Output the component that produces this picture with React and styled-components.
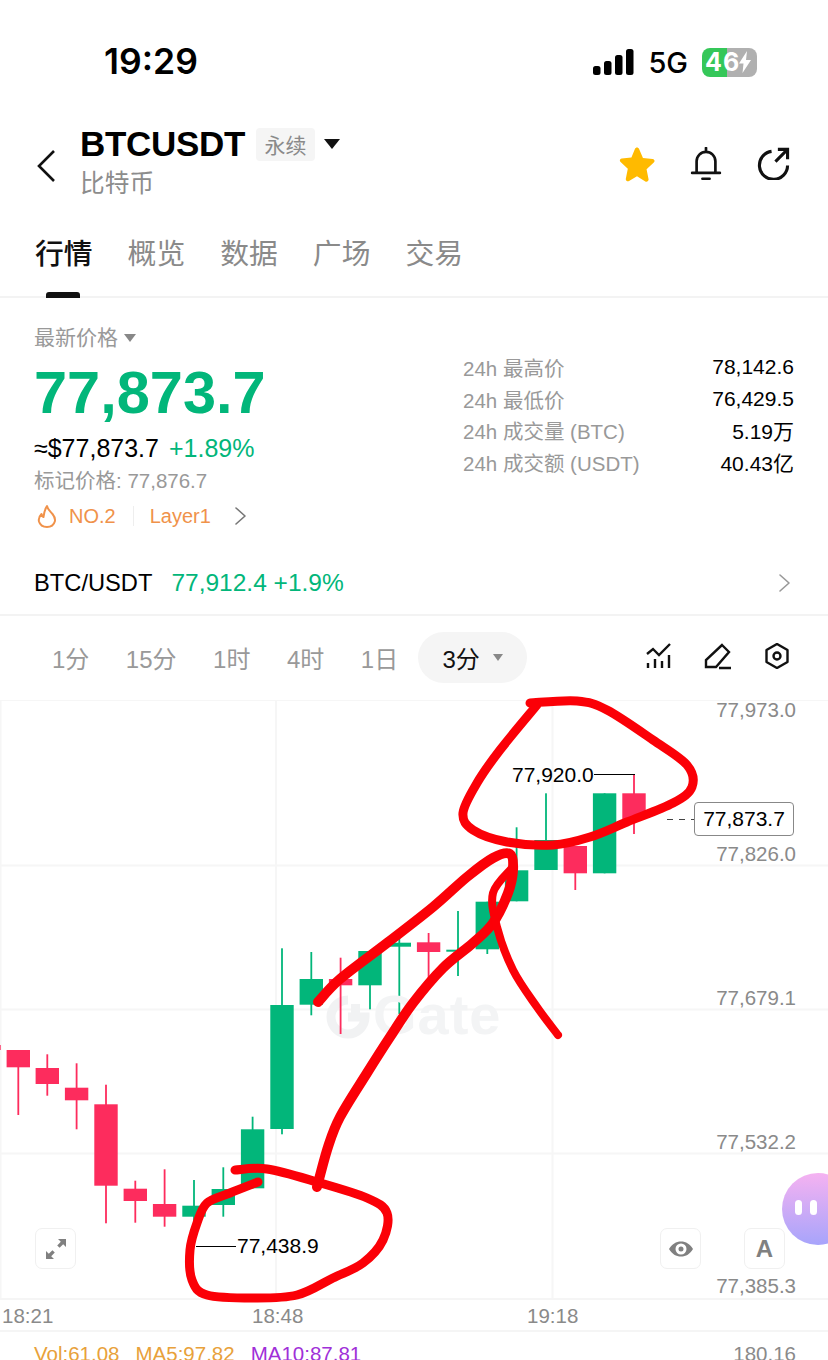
import React from 'react';
import styled, {createGlobalStyle} from 'styled-components';

const GREEN = '#02b67a';
const RED = '#fd2c5d';
const CJK = '"Liberation Sans", "Noto Sans CJK SC", sans-serif';

const GlobalStyle = createGlobalStyle`
  html, body {
    margin: 0;
    padding: 0;
    background: #fff;
  }
  * {
    box-sizing: border-box;
  }
`;

const Page = styled.div`
  position: relative;
  width: 828px;
  height: 1360px;
  overflow: hidden;
  background: #fff;
  font-family: ${CJK};
  color: #000;
`;

const StatusBar = styled.div`
  height: 100px;
  display: flex;
  align-items: center;
  padding: 24px 71px 0 104px;
`;

const Clock = styled.div`
  font-family: Inter, sans-serif;
  font-size: 35.5px;
  font-weight: 600;
  line-height: 76px;
  flex: 1;
`;

const Network = styled.div`
  font-family: Inter, sans-serif;
  font-size: 29px;
  font-weight: 500;
  margin: 0 14px;
`;

const Battery = styled.div`
  position: relative;
  width: 55px;
  height: 29px;
  border-radius: 8px;
  background: linear-gradient(90deg, #35c759 0 46%, #b0b0b0 46% 100%);
  color: #fff;
  font-family: Inter, sans-serif;
  font-size: 25px;
  font-weight: 700;
  line-height: 29px;
  padding-left: 3px;
  letter-spacing: 1px;
  display: flex;
  align-items: center;
`;

const BatteryBolt = styled.svg`
  width: 12px;
  height: 22px;
  margin-left: -1px;
`;

const Header = styled.div`
  height: 105px;
  display: flex;
  align-items: center;
  padding: 0 38px 0 36px;
`;

const BackIcon = styled.svg`
  width: 20px;
  height: 32px;
  margin: 26px 24px 0 0;
`;

const TitleBlock = styled.div`
  flex: 1;
  display: flex;
  flex-direction: column;
  gap: 7px;
  margin-top: 20px;
`;

const TitleRow = styled.div`
  display: flex;
  align-items: center;
  height: 36px;
`;

const Symbol = styled.div`
  font-size: 35px;
  font-weight: 700;
  letter-spacing: -0.3px;
`;

const ContractTag = styled.div`
  width: 59px;
  height: 33px;
  margin: 0 9px 0 11px;
  border-radius: 4px;
  background: #f5f5f5;
  color: #8a8a8a;
  font-size: 21px;
  display: flex;
  align-items: center;
  justify-content: center;
`;

const Caret = styled.div`
  width: 0;
  height: 0;
  border-left: ${p => p.$size}px solid transparent;
  border-right: ${p => p.$size}px solid transparent;
  border-top: ${p => p.$size * 1.3}px solid ${p => p.$color};
`;

const CoinName = styled.div`
  font-size: 24.7px;
  line-height: 30px;
  color: #8c8c8c;
`;

const HeaderIcons = styled.div`
  display: flex;
  align-items: center;
  gap: 34px;
  margin-top: 22px;
`;

const IconSvg = styled.svg`
  display: block;
  width: ${p => p.$size}px;
  height: ${p => p.$size}px;
`;

const Tabs = styled.div`
  height: 93px;
  display: flex;
  gap: 35px;
  padding: 28px 35px 0;
  border-bottom: 2px solid #f3f3f3;
  position: relative;
`;

const Tab = styled.div`
  font-size: 28.8px;
  line-height: 42px;
  color: ${p => (p.$active ? '#111' : '#8a8a8a')};
  font-weight: ${p => (p.$active ? 500 : 400)};
`;

const TabMark = styled.div`
  position: absolute;
  left: 46px;
  bottom: -2px;
  width: 34px;
  height: 6px;
  border-radius: 3px 3px 0 0;
  background: #111;
`;

const PriceSection = styled.div`
  height: 236px;
  display: flex;
  justify-content: space-between;
  padding: 25px 34px 0;
`;

const PriceLeft = styled.div`
  display: flex;
  flex-direction: column;
`;

const PriceLabel = styled.div`
  display: flex;
  align-items: center;
  gap: 6px;
  font-size: 21px;
  line-height: 30px;
  color: #999;
`;

const LastPrice = styled.div`
  font-size: 59.5px;
  font-weight: 700;
  line-height: 62px;
  margin-top: 9px;
  color: ${GREEN};
`;

const UsdRow = styled.div`
  display: flex;
  gap: 10px;
  font-size: 25px;
  line-height: 30px;
  margin-top: 9px;
`;

const Change = styled.span`
  color: ${GREEN};
`;

const MarkPrice = styled.div`
  font-size: 20.5px;
  line-height: 28px;
  margin-top: 4px;
  color: #999;
`;

const RankRow = styled.div`
  display: flex;
  align-items: center;
  height: 28px;
  margin-top: 7px;
  padding-left: 3px;
  font-size: 20px;
  color: #f0924a;
`;

const FlameIcon = styled.svg`
  width: 20px;
  height: 24px;
  margin-right: 12px;
`;

const RankDivider = styled.div`
  width: 1px;
  height: 20px;
  margin: 0 16px 0 17px;
  background: #eee;
`;

const RankArrow = styled.div`
  margin-left: 19px;
`;

const PriceRight = styled.dl`
  margin: 28px 0 0;
  width: 331px;
  display: grid;
  grid-template-columns: 1fr auto;
  grid-auto-rows: 31.7px;
  align-items: center;
  font-size: 20.5px;
`;

const StatLabel = styled.dt`
  color: #999;
`;

const StatValue = styled.dd`
  margin: 0;
  font-size: 21px;
  text-align: right;
`;

const SpotRow = styled.div`
  height: 82px;
  display: flex;
  align-items: center;
  padding: 18px 34px 0 34px;
  border-bottom: 2px solid #f3f3f3;
`;

const SpotName = styled.div`
  margin-right: 19px;
  font-size: 23.7px;
`;

const SpotPrice = styled.div`
  flex: 1;
  font-size: 24.5px;
  color: ${GREEN};
`;

const PeriodRow = styled.div`
  height: 84px;
  display: flex;
  align-items: center;
  padding: 0 38px 2px 52px;
  font-size: 24px;
  color: #999;
`;

const Period = styled.div`
  margin-right: 36.5px;
`;

const ActivePeriod = styled.div`
  width: 109px;
  height: 51px;
  margin-left: -16.5px;
  border-radius: 26px;
  background: #f5f5f5;
  color: #111;
  display: flex;
  align-items: center;
  justify-content: center;
  gap: 13px;
`;

const ToolIcons = styled.div`
  margin-left: auto;
  display: flex;
  gap: 32px;
`;

const Chart = styled.div`
  position: relative;
  height: 598px;
`;

const ChartSvg = styled.svg`
  position: absolute;
  inset: 0;
  display: block;
  width: 828px;
  height: 598px;
`;

const Watermark = styled.div`
  position: absolute;
  left: 373px;
  top: 287px;
  font-size: 56px;
  font-weight: 700;
  line-height: 56px;
  letter-spacing: 1px;
  color: #f3f4f5;
`;

const PriceAxis = styled.div`
  position: absolute;
  top: -2px;
  right: 32px;
  display: flex;
  flex-direction: column;
`;

const AxisLabel = styled.div`
  height: 144px;
  line-height: 24px;
  font-size: 20.5px;
  color: #8a8a8a;
  text-align: right;
`;

const ExtremeLabel = styled.div`
  position: absolute;
  left: ${p => p.$left}px;
  top: ${p => p.$top}px;
  font-size: 21px;
  line-height: 24px;
`;

const LastTag = styled.div`
  position: absolute;
  left: 694px;
  top: 102px;
  width: 100px;
  height: 34px;
  border: 1px solid #888;
  border-radius: 4px;
  background: #fff;
  font-size: 21px;
  display: flex;
  align-items: center;
  justify-content: center;
`;

const ChartButton = styled.div`
  position: absolute;
  left: ${p => p.$left}px;
  top: 528px;
  width: 41px;
  height: 41px;
  border: 1.5px solid #f0f0f0;
  border-radius: 7px;
  background: #fff;
  color: #808080;
  font-size: 24px;
  font-weight: 700;
  display: flex;
  align-items: center;
  justify-content: center;
`;

const AssistantBubble = styled.div`
  position: absolute;
  left: 782px;
  top: 473px;
  width: 72px;
  height: 72px;
  border-radius: 50%;
  background: linear-gradient(180deg, #f5b2f1 0%, #a7a4fb 100%);
  display: flex;
  gap: 8px;
  padding: 27px 0 0 13px;
`;

const BubbleEye = styled.div`
  width: 7px;
  height: 15px;
  border-radius: 4px;
  background: #fff;
`;

const TimeAxis = styled.div`
  position: relative;
  height: 34px;
  border-top: 2px solid #f5f5f5;
  border-bottom: 2px solid #f5f5f5;
  font-size: 20.5px;
  line-height: 34px;
  color: #8a8a8a;
`;

const TimeLabel = styled.span`
  position: absolute;
  left: ${p => p.$left}px;
  top: -1px;
`;

const IndicatorRow = styled.div`
  display: flex;
  gap: 16px;
  padding: 10px 32px 0 34px;
  font-size: 20.5px;
  line-height: 24px;
`;

const Indicator = styled.span`
  color: ${p => p.$color};
`;

const IndicatorValue = styled.span`
  margin-left: auto;
  color: #8a8a8a;
`;

const AnnotationSvg = styled.svg`
  position: absolute;
  inset: 0;
  width: 828px;
  height: 1360px;
  pointer-events: none;
`;

// x, body top, body bottom, wick top, wick bottom, up?
const candles = [
    [-11, 1045, 1050, 1040, 1052, false],
    [18.3, 1050, 1067.3, 1050, 1115, false],
    [47.3, 1068, 1084, 1054.3, 1095.7, false],
    [76.6, 1087.7, 1100.3, 1063.3, 1129.3, false],
    [106, 1104.3, 1185.7, 1084.7, 1223.3, false],
    [135.3, 1188.7, 1201, 1180.7, 1222.7, false],
    [164.6, 1204, 1216.7, 1169.3, 1226.7, false],
    [194, 1205.7, 1216.7, 1180, 1246, true],
    [223.3, 1189, 1205, 1167.3, 1216.7, true],
    [252.6, 1129.3, 1188.3, 1116.7, 1188.3, true],
    [282, 1005, 1129, 948.3, 1134.3, true],
    [311.3, 979, 1004.7, 952, 1015.3, true],
    [340.6, 979, 985.3, 957.7, 1034, false],
    [370, 951, 985.3, 951, 1009.3, true],
    [399.3, 942.7, 946.7, 936.7, 1020, true],
    [428.6, 942.3, 952, 933, 980, false],
    [458, 949.7, 951.7, 911, 976, true],
    [487.3, 901.7, 949.3, 901.7, 954, true],
    [516.6, 870.3, 901.3, 827.3, 901.3, true],
    [546, 840, 870, 793.3, 870, true],
    [575.3, 846, 873.3, 846, 890, false],
    [604.6, 793.3, 873.3, 793.3, 873.3, true],
    [634, 793.3, 819, 774, 834, false],
];

// the pen marks drawn over the screenshot
const strokes = [
    {width: 9, points: [[530, 703], [577, 701], [607, 710], [653, 740], [687, 765], [692, 787], [673, 803], [627, 822], [590, 837], [553, 845], [507, 842], [473, 830], [463, 813], [477, 783], [500, 750], [537, 705]]},
    {width: 10, points: [[318, 1002], [340, 979], [387, 943], [433, 907], [467, 877], [493, 858], [510, 854], [513, 870], [508, 893], [493, 923], [473, 943], [443, 968], [413, 1003], [390, 1037], [367, 1073], [340, 1117], [328, 1147], [317, 1187]]},
    {width: 8, points: [[512, 868], [493, 893], [497, 927], [513, 970], [537, 1007], [558, 1035]]},
    {width: 9, points: [[258, 1182], [230, 1193], [207, 1203], [197, 1223], [190, 1250], [192, 1280], [207, 1295], [253, 1298], [297, 1295], [333, 1278], [363, 1263], [383, 1240], [387, 1213], [367, 1198], [317, 1182], [267, 1169], [235, 1170]]},
];

// smooth pen stroke through the points
function smoothPath(points) {
    let d = `M${points[0][0]} ${points[0][1]}`;
    for (let i = 0; i < points.length - 1; i++) {
        const p0 = points[Math.max(i - 1, 0)];
        const p1 = points[i];
        const p2 = points[i + 1];
        const p3 = points[Math.min(i + 2, points.length - 1)];
        const c1x = p1[0] + (p2[0] - p0[0]) / 6;
        const c1y = p1[1] + (p2[1] - p0[1]) / 6;
        const c2x = p2[0] - (p3[0] - p1[0]) / 6;
        const c2y = p2[1] - (p3[1] - p1[1]) / 6;
        d += ` C${c1x} ${c1y} ${c2x} ${c2y} ${p2[0]} ${p2[1]}`;
    }
    return d;
}

function Candle({x, top, bottom, wickTop, wickBottom, up}) {
    const color = up ? GREEN : RED;
    return (
        <g fill={color}>
            <rect x={x - 0.9} y={wickTop} width="1.8" height={wickBottom - wickTop}/>
            <rect x={x - 11.7} y={top} width="23.4" height={bottom - top}/>
        </g>
    );
}

function ChevronRight({color}) {
    return (
        <IconSvg $size={20} viewBox="0 0 20 20" fill="none" stroke={color} strokeWidth="1.6">
            <path d="M6 2l9 8-9 8" strokeLinecap="round" strokeLinejoin="round"/>
        </IconSvg>
    );
}

function PriceChart() {
    return (
        <ChartSvg viewBox="0 700 828 598">
            <g stroke="#f6f6f6" strokeWidth="2">
                <line x1="0" y1="700" x2="828" y2="700"/>
                <line x1="0" y1="865.5" x2="828" y2="865.5"/>
                <line x1="0" y1="1009.5" x2="828" y2="1009.5"/>
                <line x1="0" y1="1153.5" x2="828" y2="1153.5"/>
                <line x1="0.5" y1="700" x2="0.5" y2="1298"/>
                <line x1="276" y1="700" x2="276" y2="1298"/>
                <line x1="552.5" y1="700" x2="552.5" y2="1298"/>
            </g>
            <path d="M348 1000a17 17 0 1 0 17 17h-17" fill="none" stroke="#f1f2f3" strokeWidth="9"/>
            <rect x="351" y="1004" width="9" height="9" fill="#f1f2f3"/>
            {candles.map(([x, top, bottom, wickTop, wickBottom, up]) => (
                <Candle key={x} x={x} top={top} bottom={bottom} wickTop={wickTop} wickBottom={wickBottom} up={up}/>
            ))}
            <g stroke="#000" strokeWidth="1" fill="none">
                <path d="M594 774.5h41"/>
                <path d="M196 1246.5h40"/>
                <path d="M667 819.5h28" stroke="#444" strokeDasharray="6 6"/>
            </g>
        </ChartSvg>
    );
}

function App() {
    return (
        <Page>
            <GlobalStyle/>
            <StatusBar>
                <Clock>19:29</Clock>
                <svg width="41" height="26" viewBox="0 0 41 26" fill="#000">
                    <rect x="0" y="17" width="7.5" height="9" rx="2.5"/>
                    <rect x="11" y="12" width="7.5" height="14" rx="2.5"/>
                    <rect x="22" y="6" width="7.5" height="20" rx="2.5"/>
                    <rect x="33" y="0" width="7.5" height="26" rx="2.5"/>
                </svg>
                <Network>5G</Network>
                <Battery>
                    46
                    <BatteryBolt viewBox="0 0 12 22" fill="#fff">
                        <path d="M8 0L0 12.5h4.5L3.5 22 12 9H7z"/>
                    </BatteryBolt>
                </Battery>
            </StatusBar>

            <Header>
                <BackIcon viewBox="0 0 20 32" fill="none" stroke="#111" strokeWidth="2.6">
                    <path d="M18 1L3 16l15 15"/>
                </BackIcon>
                <TitleBlock>
                    <TitleRow>
                        <Symbol>BTCUSDT</Symbol>
                        <ContractTag>永续</ContractTag>
                        <Caret $size={8} $color="#111"/>
                    </TitleRow>
                    <CoinName>比特币</CoinName>
                </TitleBlock>
                <HeaderIcons>
                    <IconSvg $size={36} viewBox="0 0 38 38">
                        <path d="M19 1.5c1 0 1.7.6 2.1 1.5l4.2 9.6 10.2 1.1c2 .2 2.7 2.5 1.2 3.8l-7.6 7 2.1 10.5c.4 2-1.7 3.5-3.4 2.5L19 31.8 10.6 37c-1.7 1-3.8-.5-3.4-2.5l2.1-10.5-7.6-7c-1.500-1.3-.8-3.600 1.2-3.8l10.2-1.100L16.9 3c.4-.9 1.100-1.500 2.100-1.500z" fill="#ffba00"/>
                    </IconSvg>
                    <IconSvg $size={34} viewBox="0 0 34 38" fill="none" stroke="#111" strokeWidth="3">
                        <path d="M6.5 28V16a10.5 10.5 0 0 1 21 0v12M1.5 29h31M17 1v4M13 35.5h8" strokeLinecap="round"/>
                    </IconSvg>
                    <IconSvg $size={33} viewBox="0 0 34 34" fill="none" stroke="#111" strokeWidth="3.2">
                        <path d="M15 4.5A14.5 14.5 0 1 0 31.5 19M19 15L31 3M21.5 2.5H31.5V12.5"/>
                    </IconSvg>
                </HeaderIcons>
            </Header>

            <Tabs>
                <Tab $active>行情</Tab>
                <Tab>概览</Tab>
                <Tab>数据</Tab>
                <Tab>广场</Tab>
                <Tab>交易</Tab>
                <TabMark/>
            </Tabs>

            <PriceSection>
                <PriceLeft>
                    <PriceLabel>最新价格 <Caret $size={6.5} $color="#888"/></PriceLabel>
                    <LastPrice>77,873.7</LastPrice>
                    <UsdRow>≈$77,873.7 <Change>+1.89%</Change></UsdRow>
                    <MarkPrice>标记价格: 77,876.7</MarkPrice>
                    <RankRow>
                        <FlameIcon viewBox="0 0 20 24" fill="none" stroke="#f0924a" strokeWidth="2">
                            <path d="M10 2c1 4 3 5 5.5 8 2 2.500 3 5 2.300 7.500C16.800 21 13.800 23 10 23s-7-2-8-5.500c-.7-3 .5-5.500 2.500-7.500.4 1.500 1 2.500 2 3C7 9 8 5 10 2z" strokeLinejoin="round"/>
                        </FlameIcon>
                        NO.2
                        <RankDivider/>
                        Layer1
                        <RankArrow><ChevronRight color="#777"/></RankArrow>
                    </RankRow>
                </PriceLeft>
                <PriceRight>
                    <StatLabel>24h 最高价</StatLabel><StatValue>78,142.6</StatValue>
                    <StatLabel>24h 最低价</StatLabel><StatValue>76,429.5</StatValue>
                    <StatLabel>24h 成交量 (BTC)</StatLabel><StatValue>5.19万</StatValue>
                    <StatLabel>24h 成交额 (USDT)</StatLabel><StatValue>40.43亿</StatValue>
                </PriceRight>
            </PriceSection>

            <SpotRow>
                <SpotName>BTC/USDT</SpotName>
                <SpotPrice>77,912.4 +1.9%</SpotPrice>
                <ChevronRight color="#999"/>
            </SpotRow>

            <PeriodRow>
                <Period>1分</Period>
                <Period>15分</Period>
                <Period>1时</Period>
                <Period>4时</Period>
                <Period>1日</Period>
                <ActivePeriod>3分 <Caret $size={5.5} $color="#888"/></ActivePeriod>
                <ToolIcons>
                    <IconSvg $size={26} viewBox="0 0 26 26" fill="none" stroke="#111" strokeWidth="2.4">
                        <path d="M1 11l6-5 6 6 11-11M2 20v5M9 16v9M16 18v7M23 12v13"/>
                    </IconSvg>
                    <IconSvg $size={28} viewBox="0 0 28 28" fill="none" stroke="#111" strokeWidth="2.4">
                        <path d="M18 2l7 7-13 15H2v-7zM15 25h12"/>
                    </IconSvg>
                    <IconSvg $size={26} viewBox="0 0 26 26" fill="none" stroke="#111" strokeWidth="2.4">
                        <path d="M13 1l10.5 6v12L13 25 2.5 19V7z" strokeLinejoin="round"/>
                        <circle cx="13" cy="13" r="3.5"/>
                    </IconSvg>
                </ToolIcons>
            </PeriodRow>

            <Chart>
                <PriceChart/>
                <Watermark>Gate</Watermark>
                <PriceAxis>
                    <AxisLabel>77,973.0</AxisLabel>
                    <AxisLabel>77,826.0</AxisLabel>
                    <AxisLabel>77,679.1</AxisLabel>
                    <AxisLabel>77,532.2</AxisLabel>
                    <AxisLabel>77,385.3</AxisLabel>
                </PriceAxis>
                <ExtremeLabel $left={512} $top={63}>77,920.0</ExtremeLabel>
                <ExtremeLabel $left={237} $top={534}>77,438.9</ExtremeLabel>
                <LastTag>77,873.7</LastTag>
                <ChartButton $left={35}>
                    <IconSvg $size={22} viewBox="0 0 22 22" fill="#808080">
                        <path d="M13 1h8v8l-2.8-2.8-3.6 3.6-2.400-2.400 3.600-3.600zM9 21H1v-8l2.800 2.800 3.600-3.600 2.400 2.400-3.600 3.600z"/>
                    </IconSvg>
                </ChartButton>
                <ChartButton $left={660}>
                    <IconSvg $size={26} viewBox="0 0 26 26" fill="#808080">
                        <path fillRule="evenodd" d="M1 13c3-5 7-7.5 12-7.5S22 8 25 13c-3 5-7 7.5-12 7.5S4 18 1 13zm12 5.5a5.5 5.5 0 1 0 0-11 5.5 5.5 0 0 0 0 11zm0-3a2.5 2.5 0 1 1 0-5 2.5 2.5 0 0 1 0 5z"/>
                    </IconSvg>
                </ChartButton>
                <ChartButton $left={744}>A</ChartButton>
                <AssistantBubble>
                    <BubbleEye/>
                    <BubbleEye/>
                </AssistantBubble>
            </Chart>

            <TimeAxis>
                <TimeLabel $left={2}>18:21</TimeLabel>
                <TimeLabel $left={252}>18:48</TimeLabel>
                <TimeLabel $left={527}>19:18</TimeLabel>
            </TimeAxis>

            <IndicatorRow>
                <Indicator $color="#e8a13a">Vol:61.08</Indicator>
                <Indicator $color="#e8a13a">MA5:97.82</Indicator>
                <Indicator $color="#a030d8">MA10:87.81</Indicator>
                <IndicatorValue>180.16</IndicatorValue>
            </IndicatorRow>

            <AnnotationSvg viewBox="0 0 828 1360" fill="none" stroke="#fb0007" strokeLinecap="round" strokeLinejoin="round">
                {strokes.map(({width, points}) => (
                    <path key={points[0].join()} d={smoothPath(points)} strokeWidth={width}/>
                ))}
            </AnnotationSvg>
        </Page>
    );
}

export default App;
